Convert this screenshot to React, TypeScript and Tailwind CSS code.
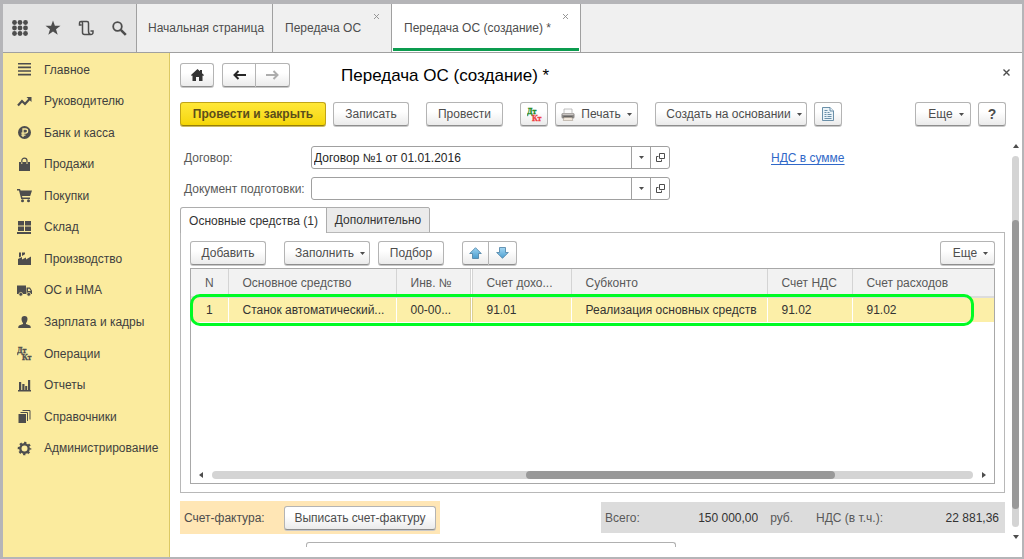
import type { ReactNode } from 'react'
import clsx from 'clsx'

const buttonBase =
  'flex h-6 shrink-0 items-center justify-center rounded-[3px] border border-[#b4b4b4] border-b-[#8e8e8e] bg-linear-to-b from-white from-40% to-[#ebebeb] text-[#4d4d4d] shadow-[0_1px_0_#c8c8c8]'

function Button({
  className,
  label,
  menu,
  children,
}: {
  className?: string
  label?: string
  menu?: boolean
  children: ReactNode
}) {
  return (
    <button type="button" aria-label={label} className={clsx(buttonBase, className)}>
      {children}
      {menu && <Caret className="ml-1.5" />}
    </button>
  )
}

function Caret({ className }: { className?: string }) {
  return (
    <svg width="5" height="3" viewBox="0 0 5 3" className={className} fill="#4d4d4d">
      <path d="M0 0h5L2.5 3z" />
    </svg>
  )
}

function DtKt({ dt, kt, size }: { dt: string; kt: string; size: number }) {
  return (
    <svg
      width={size}
      height={size}
      viewBox="0 0 15 15"
      fontFamily="Liberation Serif, serif"
      fontWeight="bold"
      fontSize="8"
      strokeWidth="0.300"
    >
      <text x="0" y="7" fill={dt} stroke={dt}>Дт</text>
      <text x="5" y="14" fill={kt} stroke={kt}>Кт</text>
    </svg>
  )
}

function Glyph({ children }: { children: ReactNode }) {
  return (
    <svg width="15" height="15" viewBox="0 0 15 15" fill="#4d4d4d">
      {children}
    </svg>
  )
}

const sections = [
  {
    label: 'Главное',
    icon: <Glyph><path d="M1 1h13v1.6H1zM1 4.6h13v1.6H1zM1 8.2h13v1.6H1zM1 11.8h13v1.6H1z" /></Glyph>,
  },
  {
    label: 'Руководителю',
    icon: (
      <Glyph>
        <path d="M1 11.5 5 7l3 3 5-5.500" fill="none" stroke="#4d4d4d" strokeWidth="2.200" />
        <path d="M9.500 3H14.500V8z" />
      </Glyph>
    ),
  },
  {
    label: 'Банк и касса',
    icon: (
      <Glyph>
        <circle cx="7.5" cy="7.5" r="6.5" />
        <path d="M6 12V4h2.500a2 2 0 0 1 0 4.200H4.300M4.300 10.200H8.500" fill="none" stroke="#fbeb9e" strokeWidth="1.300" />
      </Glyph>
    ),
  },
  {
    label: 'Продажи',
    icon: (
      <Glyph>
        <path d="M2 5h11v9H2z" />
        <path d="M4.800 7V3.800a2.600 2.600 0 0 1 5.200 0V7" fill="none" stroke="#4d4d4d" strokeWidth="1.200" />
        <path d="M4.800 5.200v1.800M10 5.200v1.800" stroke="#fbeb9e" />
      </Glyph>
    ),
  },
  {
    label: 'Покупки',
    icon: (
      <Glyph>
        <path d="M0 1h3l.6 1.500H15L13.200 8H5l.4 1.500H13V11H4.200L2 2.500H0z" />
        <circle cx="5.500" cy="12.700" r="1.500" />
        <circle cx="11.500" cy="12.700" r="1.500" />
      </Glyph>
    ),
  },
  {
    label: 'Склад',
    icon: <Glyph><path d="M1 1h6v4.500H1zM8 1h6v4.500H8zM1 6.500h6V11H1zM8 6.500h6V11H8zM0 12h14v2H0z" /></Glyph>,
  },
  {
    label: 'Производство',
    icon: <Glyph><path d="M1 14V8l4-2V8.500l4-2V8.500l5-3V14zM2 1.500h2v4L2 6.500zM5 1.500h3v1.800L5 5z" /></Glyph>,
  },
  {
    label: 'ОС и НМА',
    icon: (
      <Glyph>
        <path d="M0 2.500h9V11H0zM9.500 4.500h3.500l2 3.300V11H9.500z" />
        <path d="M11 5.700h1.500l1.200 2.200H11z" fill="#fbeb9e" />
        <circle cx="3.800" cy="11.300" r="1.900" stroke="#fbeb9e" strokeWidth="0.700" />
        <circle cx="11.800" cy="11.300" r="1.900" stroke="#fbeb9e" strokeWidth="0.700" />
      </Glyph>
    ),
  },
  {
    label: 'Зарплата и кадры',
    icon: (
      <Glyph>
        <path d="M7.500 1c2 0 3 1.200 3 3S9.500 7.500 9 8v1l4 1.500q.8.500.8 2.500H1.200q0-2 .8-2.500L6 9V8C5.500 7.500 4.500 5.800 4.500 4S5.500 1 7.500 1z" />
      </Glyph>
    ),
  },
  { label: 'Операции', icon: <DtKt dt="#4d4d4d" kt="#4d4d4d" size={15} /> },
  {
    label: 'Отчеты',
    icon: <Glyph><path d="M2 4h2.200v8H2zM5.300 6h2.200v6H5.300zM8.200 8h2v4h-2zM11 2h2.200v10H11zM1 12h13v1.500H1z" /></Glyph>,
  },
  {
    label: 'Справочники',
    icon: (
      <Glyph>
        <path d="M1.500 5h7.500v9H1.500z" />
        <path d="M3.500 3.500h7V12M5.500 1.500h7.500V10.500" fill="none" stroke="#4d4d4d" />
      </Glyph>
    ),
  },
  {
    label: 'Администрирование',
    icon: (
      <Glyph>
        <circle cx="7.5" cy="7.5" r="4.200" fill="none" stroke="#4d4d4d" strokeWidth="2.400" />
        <circle cx="7.5" cy="7.5" r="5.700" fill="none" stroke="#4d4d4d" strokeWidth="2.200" strokeDasharray="2.240 2.240" strokeDashoffset="1.120" />
      </Glyph>
    ),
  },
]

const columns = [
  { title: 'N', value: '1', width: 'w-[37px]' },
  { title: 'Основное средство', value: 'Станок автоматический...', width: 'w-[168px]' },
  { title: 'Инв. №', value: '00-00...', width: 'w-[75px]' },
  { title: 'Счет дохо...', value: '91.01', width: 'w-[100px]' },
  { title: 'Субконто', value: 'Реализация основных средств', width: 'w-[196px]' },
  { title: 'Счет НДС', value: '91.02', width: 'w-[85px]' },
  { title: 'Счет расходов', value: '91.02', width: '' },
]

function TopBar() {
  return (
    <header className="flex h-[49px] shrink-0 border-b border-[#a0a0a0] bg-[#f0f0f0]">
      <div className="flex w-[134px] shrink-0 items-center gap-[11px] border-r border-[#a0a0a0] bg-[#e4e4e4] pl-1.5">
        <button type="button" aria-label="Меню" className="flex size-[22px] items-center justify-center">
          <svg width="16" height="16" viewBox="0 0 16 16" fill="#4d4d4d">
            {[2.5, 8, 13.5].map((y) => [2.5, 8, 13.5].map((x) => <circle key={`${x}-${y}`} cx={x} cy={y} r="2.4" />))}
          </svg>
        </button>
        <button type="button" aria-label="Избранное" className="flex size-[22px] items-center justify-center">
          <svg width="16" height="16" viewBox="0 0 16 16" fill="#4d4d4d">
            <path d="m8 .5 1.900 5.300h5.600L11 9.200l1.700 5.600L8 11.500l-4.700 3.300L5 9.200.5 5.800h5.600z" />
          </svg>
        </button>
        <button type="button" aria-label="История" className="flex size-[22px] items-center justify-center">
          <svg width="16" height="16" viewBox="0 0 16 16" fill="none" stroke="#4d4d4d" strokeWidth="1.500">
            <path d="M3.500 5H1.500V3q0-1.500 1.500-1.500H9q1.500 0 1.500 1.500V11q0 3.500 2.300 3.500T15 12V11H12.500M3 1.500Q4.500 1.500 4.500 3V12.500q0 2 2 2h6.500" />
          </svg>
        </button>
        <button type="button" aria-label="Поиск" className="flex size-[22px] items-center justify-center">
          <svg width="15" height="15" viewBox="0 0 15 15" fill="none" stroke="#4d4d4d">
            <circle cx="5.500" cy="5.500" r="4.300" strokeWidth="1.800" />
            <path d="m8.800 8.800 5 5" strokeWidth="2.600" />
          </svg>
        </button>
      </div>
      <nav className="flex text-[#4d4d4d]">
        <a href="#home" className="flex w-[136px] items-center border-r border-[#a0a0a0] pl-[11px]">
          Начальная страница
        </a>
        <div className="relative flex w-[119px] items-center border-r border-[#a0a0a0] pl-3">
          <a href="#list">Передача ОС</a>
          <CloseTab />
        </div>
        <div className="relative flex w-[189px] items-center border-r border-[#a0a0a0] bg-white pl-3">
          <a href="#new">Передача ОС (создание) *</a>
          <CloseTab />
          <div className="absolute inset-x-px bottom-px h-[3px] bg-[#0c9c4f]" />
        </div>
      </nav>
    </header>
  )
}

function CloseTab() {
  return (
    <button type="button" aria-label="Закрыть вкладку" className="absolute top-2.5 right-3">
      <svg width="5" height="5" viewBox="0 0 5 5" stroke="#8c8c8c" strokeWidth="0.900">
        <path d="m0 0 5 5M5 0 0 5" />
      </svg>
    </button>
  )
}

function Sidebar() {
  return (
    <nav className="w-[167px] shrink-0 border-r border-[#dcc964] bg-[#fbeb9e] pt-px">
      <ul className="flex h-[410px] flex-col">
        {sections.map(({ label, icon }) => (
          <li key={label} className="flex flex-1 items-center">
            <a href="#section" className="flex items-center gap-3 pl-3.5 text-[#3f3f3f]">
              {icon}
              {label}
            </a>
          </li>
        ))}
      </ul>
    </nav>
  )
}

function Lookup({ id, label, value }: { id: string; label: string; value: string }) {
  return (
    <div className="flex h-[23px] items-center">
      <label htmlFor={id} className="w-[131px] shrink-0 pl-1 whitespace-nowrap text-[#595959]">{label}</label>
      <div className="flex h-full w-[359px] rounded-[3px] border border-[#a0a0a0]">
        <input id={id} defaultValue={value} className="min-w-0 flex-1 px-0.5 text-[#262626] outline-none" />
        <button type="button" aria-label="Выбрать" className="flex w-[19px] items-center justify-center border-l border-[#a0a0a0]">
          <Caret />
        </button>
        <button type="button" aria-label="Открыть" className="flex w-[19px] items-center justify-center border-l border-[#a0a0a0]">
          <svg width="9" height="9" viewBox="0 0 9 9" fill="none" stroke="#4d4d4d">
            <path d="M3.500.5h5v5h-5zM2.500 3.500h-2v5h5v-2" />
          </svg>
        </button>
      </div>
    </div>
  )
}

function MoveArrow({ down }: { down?: boolean }) {
  return (
    <svg width="13" height="12" viewBox="0 0 13 12" className={clsx(down && 'rotate-180')}>
      <defs>
        <linearGradient id={down ? 'blueDown' : 'blueUp'} x2="0" y2="1">
          <stop stopColor={down ? '#4d9fd0' : '#9bd3f2'} />
          <stop offset="1" stopColor={down ? '#a5d8f4' : '#4b9ccd'} />
        </linearGradient>
      </defs>
      <path d="M6.500.7 12.300 6.500H9.500v5h-6v-5H.7z" fill={down ? 'url(#blueDown)' : 'url(#blueUp)'} stroke="#4a7fa3" strokeWidth="0.800" />
    </svg>
  )
}

function AssetsTable() {
  return (
    <div className="relative mt-[3px] flex min-h-0 flex-1 flex-col border border-[#a8a8a8]">
      <table className="w-full table-fixed border-collapse text-left">
        <thead>
          <tr className="h-7 border-b-2 border-[#dcdcdc] bg-[#f2f2f2] text-[#595959]">
            {columns.map((c, i) => (
              <th
                key={c.title}
                className={clsx(
                  'truncate border-[#d4d4d4] font-normal',
                  c.width,
                  i === 0 ? 'text-center' : 'pl-3.5',
                  i === 2 ? 'border-r-3 border-double' : i < 6 && 'border-r'
                )}
              >
                {c.title}
              </th>
            ))}
          </tr>
        </thead>
        <tbody>
          <tr className="h-[25px] bg-[#fcefa8] text-[#333]">
            {columns.map((c, i) => (
              <td
                key={c.title}
                className={clsx(
                  'truncate',
                  i === 0 ? 'text-center' : 'pl-3.5',
                  i === 2 ? 'border-r-3 border-double border-[#dccf92]' : i < 6 && 'border-r border-white'
                )}
              >
                {c.value}
              </td>
            ))}
          </tr>
        </tbody>
      </table>
      <div className="absolute top-[25px] right-5 -left-px h-8 rounded-[10px] border-3 border-[#00fb24]" />
      <div className="mt-auto flex h-3.5 items-center px-2 pb-0.5">
        <svg width="4" height="6" viewBox="0 0 4 6" fill="#4d4d4d"><path d="M4 0v6L0 3z" /></svg>
        <div className="mx-[9px] flex h-2 flex-1 rounded-full bg-[#d4d4d4]">
          <div className="flex-[314]" />
          <div className="flex-[309] rounded-full bg-[#999]" />
          <div className="flex-[138]" />
        </div>
        <svg width="4" height="6" viewBox="0 0 4 6" fill="#4d4d4d"><path d="M0 0v6l4-3z" /></svg>
      </div>
    </div>
  )
}

function FormHeader() {
  return (
    <>
      <div className="flex h-6 items-center">
        <Button label="Домой" className="w-[34px]">
          <svg width="13" height="12" viewBox="0 0 13 12" fill="#333">
            <path d="M6.500 0 9 2.300V1h2v3.200l2 1.900-.8.900-.7-.6V12H8V8H5v4H1.500V6.400L.8 7 0 6.100z" />
          </svg>
        </Button>
        <div className="ml-2 flex">
          <Button label="Назад" className="w-[34px] rounded-r-none">
            <svg width="13" height="10" viewBox="0 0 13 10" fill="none" stroke="#262626" strokeWidth="2">
              <path d="M1.500 5H13M5.500 1l-4 4 4 4" />
            </svg>
          </Button>
          <Button label="Вперед" className="w-[34px] rounded-l-none border-l-0">
            <svg width="13" height="10" viewBox="0 0 13 10" fill="none" stroke="#adadad" strokeWidth="2">
              <path d="M11.500 5H0M7.500 1l4 4-4 4" />
            </svg>
          </Button>
        </div>
        <h1 className="ml-[51px] pt-0.5 text-[17px] text-black">Передача ОС (создание) *</h1>
        <button type="button" aria-label="Закрыть" className="mr-3 mb-1.5 ml-auto">
          <svg width="7" height="7" viewBox="0 0 7 7" stroke="#4d4d4d" strokeWidth="1.400">
            <path d="m.5.5 6 6M6.500.5l-6 6" />
          </svg>
        </button>
      </div>
      <div className="mt-[15px] flex items-center pr-4">
        <button
          type="button"
          className="h-6 w-[146px] shrink-0 rounded-[3px] border border-[#c0a418] border-b-[#957e0c] bg-linear-to-b from-[#ffe838] to-[#f5d600] font-bold whitespace-nowrap text-[#5c4e1a] shadow-[0_1px_0_#cdbb60]"
        >
          Провести и закрыть
        </button>
        <Button className="ml-[7px] w-[76px]">Записать</Button>
        <Button className="ml-[17px] w-[77px]">Провести</Button>
        <Button label="Дт Кт" className="ml-[17px] w-7">
          <DtKt dt="#1f8a1f" kt="#f03c3c" size={15} />
        </Button>
        <Button menu className="ml-[7px] w-[83px]">
          <svg width="14" height="13" viewBox="0 0 14 13" className="mr-1.5">
            <path d="M3 1h8v5H3z" fill="#fafafa" stroke="#b0b0b0" strokeWidth="0.800" />
            <rect x="0.500" y="5" width="13" height="5.500" rx="1.500" fill="#8d8a88" />
            <path d="M1.500 5.500h11v1.500h-11z" fill="#c9c5c2" />
            <path d="M2.500 8.500h9v1h-9z" fill="#3f3f3f" />
            <path d="M3 9.500h8l.8 3H2.200z" fill="#f0e7dc" stroke="#a89c90" strokeWidth="0.600" />
          </svg>
          Печать
        </Button>
        <Button menu className="ml-[17px] w-[152px] pl-1.5">Создать на основании</Button>
        <Button label="Отчет" className="ml-[7px] w-7">
          <svg width="12" height="14" viewBox="0 0 12 14" fill="#eaf3f8" stroke="#5b85a0" strokeWidth="0.900">
            <path d="M.5.5H8L11.500 4V13.500H.5z" />
            <path d="M8 .5V4h3.500M2.500 3.500h3M2.500 5.500h2M5.500 5.500h2M2.500 7.500h2M5.500 7.500h4M2.500 9.500h2M5.500 9.500h4M2.500 11.500h7" />
          </svg>
        </Button>
        <Button menu className="ml-auto w-14 pl-1.5">Еще</Button>
        <Button className="ml-[7px] w-7 text-sm font-bold">?</Button>
      </div>
    </>
  )
}

function AssetsPanel() {
  return (
    <>
      <div className="mt-[7px] -mb-px flex h-[26px]" role="tablist">
        <button
          type="button"
          role="tab"
          aria-selected="true"
          className="relative w-[147px] rounded-tl-[3px] border border-b-0 border-[#adadad] bg-white text-[#333]"
        >
          Основные средства (1)
        </button>
        <button
          type="button"
          role="tab"
          aria-selected="false"
          className="-ml-px w-[104px] rounded-tr-[2px] border border-[#adadad] bg-[#ebebeb] text-[#333]"
        >
          Дополнительно
        </button>
      </div>
      <section className="flex min-h-0 flex-1 flex-col border border-[#b8b8b8] px-[9px] pt-2 pb-2">
        <div className="flex">
          <Button className="w-[76px]">Добавить</Button>
          <Button menu className="ml-[18px] w-[86px] pl-1.5">Заполнить</Button>
          <Button className="ml-2 w-[66px]">Подбор</Button>
          <Button label="Вверх" className="ml-[18px] w-[27px] rounded-r-none"><MoveArrow /></Button>
          <Button label="Вниз" className="w-7 rounded-l-none border-l-0"><MoveArrow down /></Button>
          <Button menu className="ml-auto w-[55px] pl-1.5">Еще</Button>
        </div>
        <AssetsTable />
      </section>
    </>
  )
}

function Totals() {
  return (
    <div className="mt-2 flex h-[33px] items-center justify-between">
      <div className="flex h-full w-[260px] items-center bg-[#ffe6b5] pl-1 text-[#4d4d4d]">
        <span className="w-[100px]">Счет-фактура:</span>
        <Button className="w-[152px]">Выписать счет-фактуру</Button>
      </div>
      <div className="flex h-[31px] w-[404px] items-center bg-[#dcdcdc] px-1 text-[#595959]">
        <label htmlFor="total">Всего:</label>
        <input id="total" readOnly defaultValue="150 000,00" className="ml-auto h-6 w-[116px] pr-0.5 text-right text-[#333]" />
        <span className="ml-2.5">руб.</span>
        <label htmlFor="vat" className="ml-[23px]">НДС (в т.ч.):</label>
        <input id="vat" readOnly defaultValue="22 881,36" className="ml-0.5 h-6 w-[116px] pr-0.5 text-right text-[#333]" />
      </div>
    </div>
  )
}

function PageScroll() {
  return (
    <div className="flex w-[17px] shrink-0 flex-col items-center pt-2 pb-[18px] pl-1">
      <svg width="6" height="4" viewBox="0 0 6 4" fill="#4d4d4d"><path d="M0 4h6L3 0z" /></svg>
      <div className="my-2 flex w-[7px] flex-1 flex-col rounded-full bg-[#d4d4d4]">
        <div className="flex-[65]" />
        <div className="flex-[292] rounded-full bg-[#999]" />
        <div className="flex-[18]" />
      </div>
      <svg width="6" height="4" viewBox="0 0 6 4" fill="#4d4d4d"><path d="M0 0h6L3 4z" /></svg>
    </div>
  )
}

export default function App() {
  return (
    <div className="flex h-screen flex-col bg-[#b5b5b8] pt-1 pr-0.5 pb-0.5 pl-[3px] font-['Liberation_Sans',Arial,sans-serif] text-xs">
      <TopBar />
      <div className="flex min-h-0 flex-1 bg-white">
        <Sidebar />
        <main className="flex min-w-0 flex-1 flex-col pt-2.5 pl-2.5">
          <FormHeader />
          <div className="mt-[10px] flex min-h-0 flex-1">
            <div className="flex min-w-0 flex-1 flex-col pt-2.5">
              <div className="flex">
                <div className="flex flex-col gap-2">
                  <Lookup id="contract" label="Договор:" value="Договор №1 от 01.01.2016" />
                  <Lookup id="prep" label="Документ подготовки:" value="" />
                </div>
                <a href="#vat" className="mt-1 ml-[101px] self-start text-[#3068c8] underline underline-offset-2">
                  НДС в сумме
                </a>
              </div>
              <AssetsPanel />
              <Totals />
              <div className="mt-2 mb-2.5 ml-[126px] h-[5px] w-[370px] shrink-0 rounded-t-[3px] border border-b-0 border-[#b0b0b0]" />
            </div>
            <PageScroll />
          </div>
        </main>
      </div>
    </div>
  )
}
